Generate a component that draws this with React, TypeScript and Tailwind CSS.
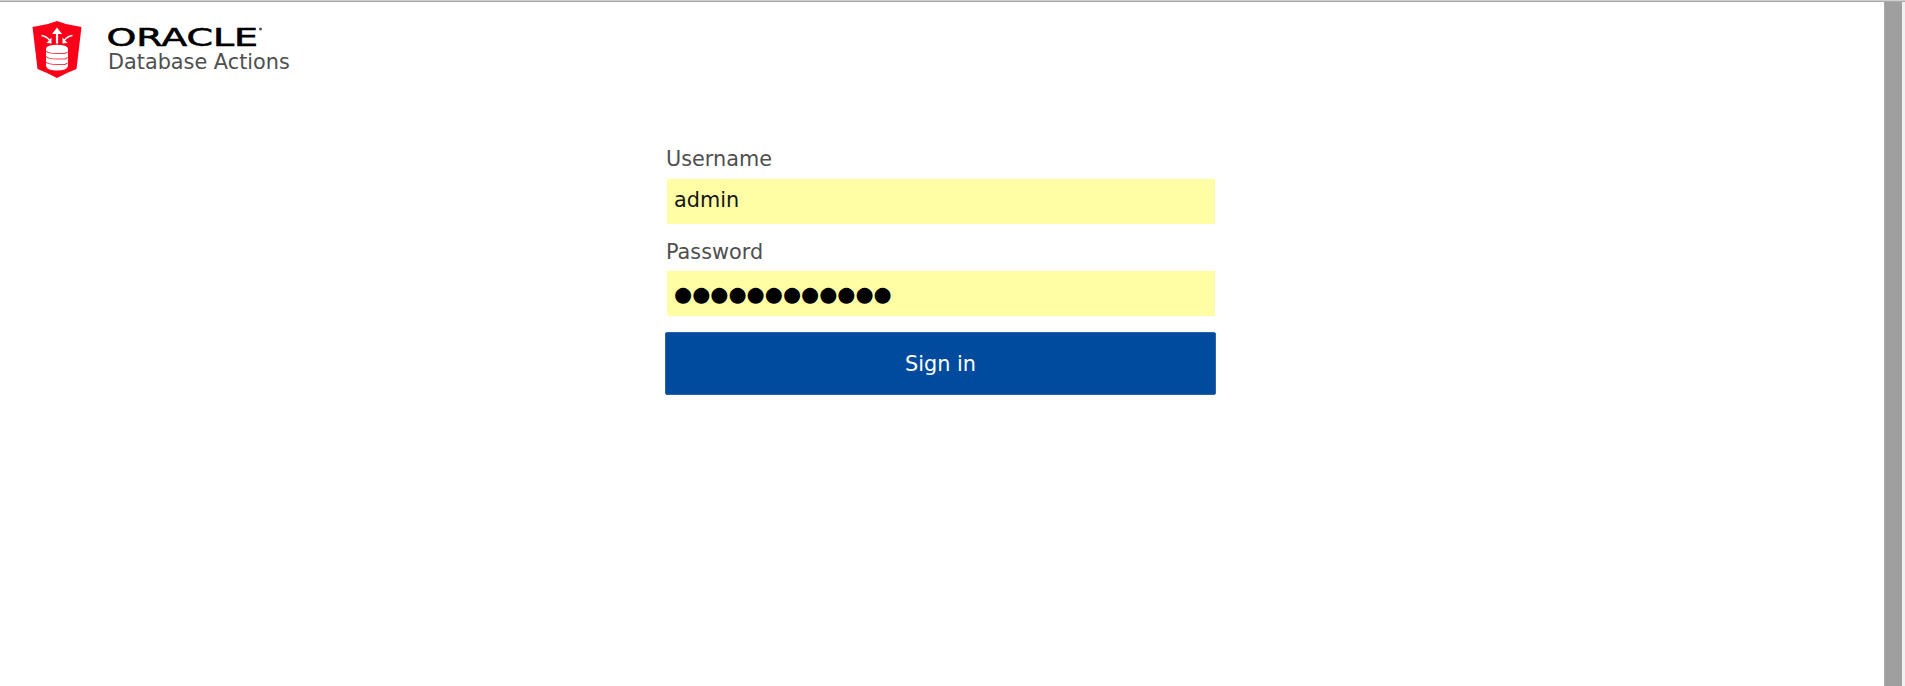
import React from "react";

function Shield() {
  return (
    <svg className="h-[58px] w-[50px] shrink-0" viewBox="0 0 50 58" fill="none">
      <path d="M25 0 L34 3 L49.500 6 L44.500 48 L35 52 L25 57 L15 52 L5.500 48 L0.500 6 L16 3 Z" fill="#fd0019" />
      <path d="M14 28 V45 Q15 49.500 25 49.500 Q35 49.500 36 45 V28 Z" fill="#fff" />
      <ellipse cx="25" cy="27.500" rx="11" ry="3.800" fill="#fff" />
      <path d="M14 30 Q16 32.500 25 32.500 H33 L35.500 31 M14 35.500 Q16 38 25 38 H33 L35.500 36.500 M14 41 Q16 43.500 25 43.500 H33 L35.500 42" stroke="#fd3a48" strokeWidth="1.200" />
      <path d="M25 22.500 V12" stroke="#fff" strokeWidth="2.200" />
      <path d="M25 6.500 L30 13 H20 Z" fill="#fff" />
      <path d="M9.500 14.500 Q14 15 18 19.500 M40.500 14.500 Q36 15 32 19.500" stroke="#fff" strokeWidth="1.500" />
      <path d="M19.500 16.500 V22.500 L14.500 22 Z M30.500 16.500 V22.500 L35.500 22 Z" fill="#fff" />
    </svg>
  );
}

function Wordmark() {
  return (
    <svg className="-mt-1 -ml-[2px] h-[31px] w-[160px]" viewBox="0 0 160 31" role="img" aria-label="ORACLE">
      <text
        x="0.500"
        y="25"
        textLength="151.5"
        lengthAdjust="spacingAndGlyphs"
        stroke="#000"
        strokeWidth="0.600"
        className="fill-black font-['DejaVu_Sans',sans-serif] text-[25px]"
      >
        ORACLE
      </text>
      <circle cx="154.500" cy="8" r="1.500" fill="#555" />
    </svg>
  );
}

export default function App() {
  return (
    <div className="flex h-[686px] w-[1905px] flex-col overflow-hidden bg-white font-['DejaVu_Sans',sans-serif] text-[20.8px] text-[#4f4f4f]">
      <div className="h-[2px] shrink-0 border-t border-[#cfcfcf] bg-[#aaaaaa]" />
      <div className="flex min-h-0 flex-1">
        <main className="flex-1">
          <header className="flex h-[143px] pt-[19px] pl-8">
            <Shield />
            <div className="flex flex-col pt-[4px] pl-[26px]">
              <Wordmark />
              <div className="-mt-[2px] h-[24px] whitespace-nowrap leading-[24px]">Database Actions</div>
            </div>
          </header>
          <form className="ml-[665px] flex w-[551px] flex-col">
            <label className="flex h-[34px] items-start pl-px leading-[28px]">Username</label>
            <div className="mr-px ml-[2px] flex h-[45px] items-center bg-[#fffea5] pl-[7px] pb-[2px] text-[#161616]">admin</div>
            <label className="flex h-[47px] items-start pt-[14px] pl-px leading-[28px]">Password</label>
            <div className="mr-px ml-[2px] flex h-[45px] items-center bg-[#fffea5] pt-[3px] pl-[7px] text-black">
              ●●●●●●●●●●●●
            </div>
            <button
              type="button"
              className="mt-4 h-[63px] rounded-[2px] border border-[#2b63ad] bg-[#004b9d] pt-[2px] text-white"
            >
              Sign in
            </button>
          </form>
        </main>
        <div className="w-[21px] shrink-0 border-r-[3px] border-l border-r-[#f0f0f0] border-l-[#aaaaaa] bg-[#9f9f9f]" />
      </div>
    </div>
  );
}
